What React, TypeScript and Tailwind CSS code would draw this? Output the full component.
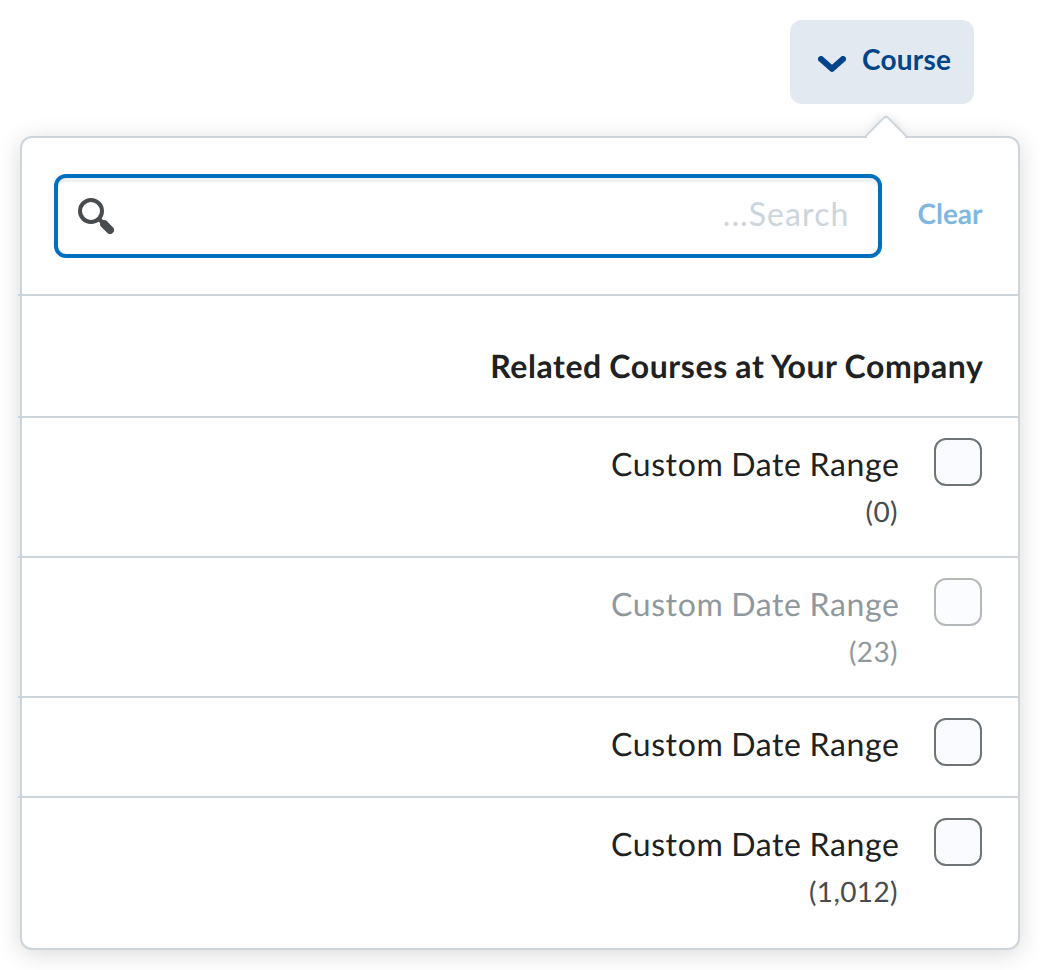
const items = [
  { label: 'Custom Date Range', count: '(0)', disabled: false, height: 'h-[138px]' },
  { label: 'Custom Date Range', count: '(23)', disabled: true, height: 'h-[138px]' },
  { label: 'Custom Date Range', count: '', disabled: false, height: 'h-[98px]' },
  { label: 'Custom Date Range', count: '(1,012)', disabled: false, height: 'h-[150px]' },
];

function Divider() {
  return <div className="-ml-1 h-0.5 bg-[#cdd5dc]" />;
}

function SearchIcon() {
  return (
    <svg className="size-9" viewBox="0 0 36 36" fill="none" stroke="#494c4e">
      <circle cx="13" cy="13" r="11" strokeWidth="4" />
      <path d="M20.5 20.5L26 26" strokeWidth="4" />
      <path d="M26.2 26.2L32 32" strokeWidth="8" strokeLinecap="round" />
    </svg>
  );
}

export default function App() {
  return (
    <div className="h-[970px] w-[1040px] overflow-hidden bg-white px-5 pt-5 font-['Lato',sans-serif] text-[32px] text-[#202122] [font-kerning:normal] [text-rendering:geometricPrecision]">
      <div className="flex justify-end pr-[46px]">
        <button className="flex h-[84px] w-[184px] items-center rounded-xl bg-[#e3e9f1] pl-7 text-[28px] font-bold tracking-[0.25px] text-[#004489]">
          <svg className="mt-1 h-4 w-7" viewBox="0 0 28 16" fill="none" stroke="#004489" strokeWidth="6" strokeLinecap="round" strokeLinejoin="round">
            <path d="M3 3L14 12.8L25 3" />
          </svg>
          <span className="-mt-1.5 ml-4 leading-10">Course</span>
        </button>
      </div>

      <div className="relative mt-8 flex h-[814px] flex-col rounded-xl border-2 border-[#cdd5dc] bg-white shadow-[0_4px_24px_rgba(0,0,0,0.15)]">
        <div className="absolute -top-[26px] left-[834px] h-[26px] w-[60px] overflow-hidden">
          <div className="absolute top-[9px] left-[14px] size-8 rotate-45 rounded-[4px] border-2 border-[#cdd5dc] bg-white shadow-[-4px_-4px_12px_-5px_rgba(73,76,78,0.2)]" />
        </div>

        <div className="flex h-[156px] items-center pr-[35.5px] pl-8">
          <div className="flex h-[84px] w-[828px] items-center rounded-xl border-4 border-[#006fbf] pr-[28.5px] pl-5 shadow-[inset_0_4px_0_0_rgba(177,189,197,0.2)]">
            <SearchIcon />
            <input
              dir="rtl"
              placeholder="Search..."
              className="-mt-1 min-w-0 flex-1 bg-transparent tracking-[1.1px] outline-none placeholder:text-[#cdd5dc]"
            />
          </div>
          <span className="-mt-1.5 ml-auto text-[28px] leading-10 font-bold text-[#7fb7df]">Clear</span>
        </div>
        <Divider />
        <h2 className="h-[120px] pt-12 pr-[34.5px] text-right leading-[44px] font-bold tracking-[0.58px] [word-spacing:-0.8px]">
          Related Courses at <span className="-ml-px tracking-[-4.2px]">Y</span>our Company
        </h2>
        {items.map((item, i) => (
          <div key={i}>
            <Divider />
            <div className={`flex justify-end pt-5 pr-9 ${item.height}`}>
              <div className="mr-[34.5px] flex flex-col items-end">
                <span className={`mt-0.5 leading-[48px] tracking-[0.62px] [word-spacing:-0.9px] ${item.disabled ? 'text-[#90989d]' : ''}`}>{item.label}</span>
                <span className={`mt-px mr-[1.5px] text-[28px] leading-[44px] tracking-[0.4px] ${item.disabled ? 'text-[#90989d]' : 'text-[#494c4e]'}`}>{item.count}</span>
              </div>
              <span className={`size-12 rounded-xl border-2 border-[#6e7477] bg-[#f9fbff] ${item.disabled ? 'opacity-50' : ''}`} />
            </div>
          </div>
        ))}
      </div>
    </div>
  );
}
